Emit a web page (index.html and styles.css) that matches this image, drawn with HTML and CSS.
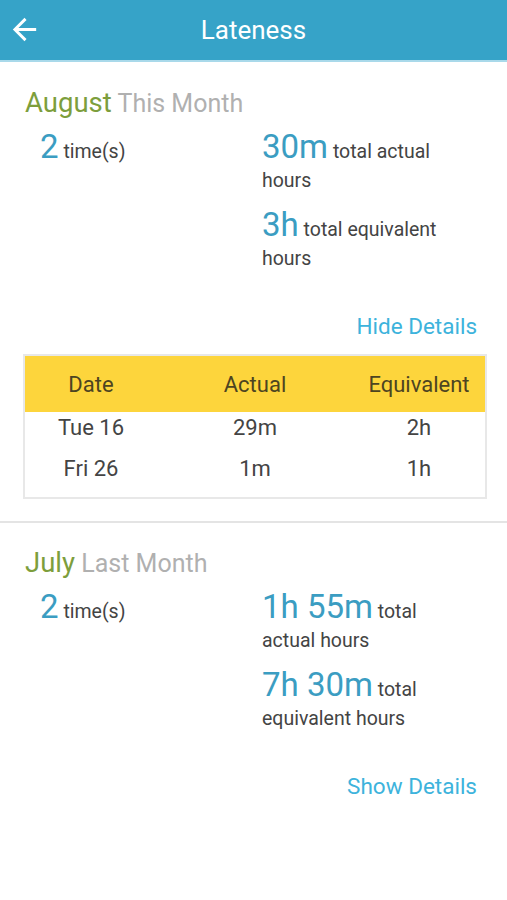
FILE: index.html
```html
<!DOCTYPE html>
<html lang="en">

<head>
    <meta charset="utf-8">
    <meta name="viewport" content="width=device-width, initial-scale=1.0">
    <title>Lateness</title>

    <link rel="stylesheet" href="styles.css">
</head>

<body>

    <header class="topbar">
        <button class="tilbage" aria-label="Back">
            <svg viewBox="0 0 24 24" width="35" height="35">
                <path d="M20 11H7.83l5.59-5.59L12 4l-8 8 8 8 1.41-1.41L7.83 13H20v-2z" fill="#fff" />
            </svg>
        </button>
        <h1>Lateness</h1>
    </header>

    <main>
        <section class="maaned">
            <h2><span class="navn">August</span> This Month</h2>
            <div class="tal">
                <p class="gange"><span class="stor">2</span> time(s)</p>
                <div class="timer">
                    <p><span class="stor">30m</span> total actual hours</p>
                    <p><span class="stor">3h</span> total equivalent hours</p>
                </div>
            </div>
            <a class="detaljer" href="#">Hide Details</a>
            <div class="tabel">
                <div class="hoved">
                    <span>Date</span>
                    <span>Actual</span>
                    <span>Equivalent</span>
                </div>
                <div class="raekke">
                    <span>Tue 16</span>
                    <span>29m</span>
                    <span>2h</span>
                </div>
                <div class="raekke">
                    <span>Fri 26</span>
                    <span>1m</span>
                    <span>1h</span>
                </div>
            </div>
        </section>

        <section class="maaned">
            <h2><span class="navn">July</span> Last Month</h2>
            <div class="tal">
                <p class="gange"><span class="stor">2</span> time(s)</p>
                <div class="timer">
                    <p><span class="stor">1h 55m</span> total actual hours</p>
                    <p><span class="stor">7h 30m</span> total equivalent hours</p>
                </div>
            </div>
            <a class="detaljer" href="#">Show Details</a>
        </section>
    </main>

</body></html>
```

FILE: styles.css
```css
body {
    margin: 0;
    font-family: Roboto, "Noto Sans", sans-serif;
    background: #fff;
    color: #444;
}

.topbar {
    height: 60px;
    background: #36a3c8;
    border-bottom: 2px solid #a9d9ea;
    display: flex;
    align-items: center;
    justify-content: center;
    position: relative;
}

.tilbage {
    position: absolute;
    left: 7px;
    top: 12px;
    border: none;
    background: none;
    padding: 0;
    display: flex;
}

.topbar h1 {
    margin: 0;
    color: #fff;
    font-weight: 400;
    font-size: 26px;
}

.maaned {
    padding: 26px 33px 22px 25px;
    display: flex;
    flex-direction: column;
}

.maaned + .maaned {
    border-top: 2px solid #e4e4e4;
    padding-top: 25px;
}

.maaned h2 {
    margin: 0;
    font-size: 25px;
    line-height: 30px;
    font-weight: 400;
    color: #b0b0b0;
}

.navn {
    font-size: 27.5px;
    color: #7d9e3c;
}

.tal {
    display: grid;
    grid-template-columns: 222px 1fr;
    padding-left: 15px;
    margin-top: 10px;
}

.tal p {
    margin: 0;
    font-size: 19.5px;
    line-height: 29px;
    color: #444;
}

.stor {
    font-size: 33px;
    color: #3b9dc2;
    line-height: 36px;
}

.timer {
    display: flex;
    flex-direction: column;
    gap: 12px;
}

.detaljer {
    align-self: flex-end;
    margin-top: 40px;
    margin-right: -3px;
    color: #3db3dc;
    text-decoration: none;
    font-size: 22.5px;
    line-height: 26px;
}

.tabel {
    margin: 15px -13px 0 -2px;
    border: 2px solid #e8e8e8;
    padding-bottom: 8px;
}

.hoved,
.raekke {
    display: grid;
    grid-template-columns: 132px 1fr 132px;
    text-align: center;
    font-size: 22px;
}

.hoved {
    background: #fdd53c;
    color: #4d4421;
    height: 56px;
    align-items: center;
}

.raekke {
    height: 41px;
    align-items: center;
}

.raekke:nth-child(2) {
    height: 30px;
}

.raekke:nth-child(3) {
    margin-top: 6px;
}
```
